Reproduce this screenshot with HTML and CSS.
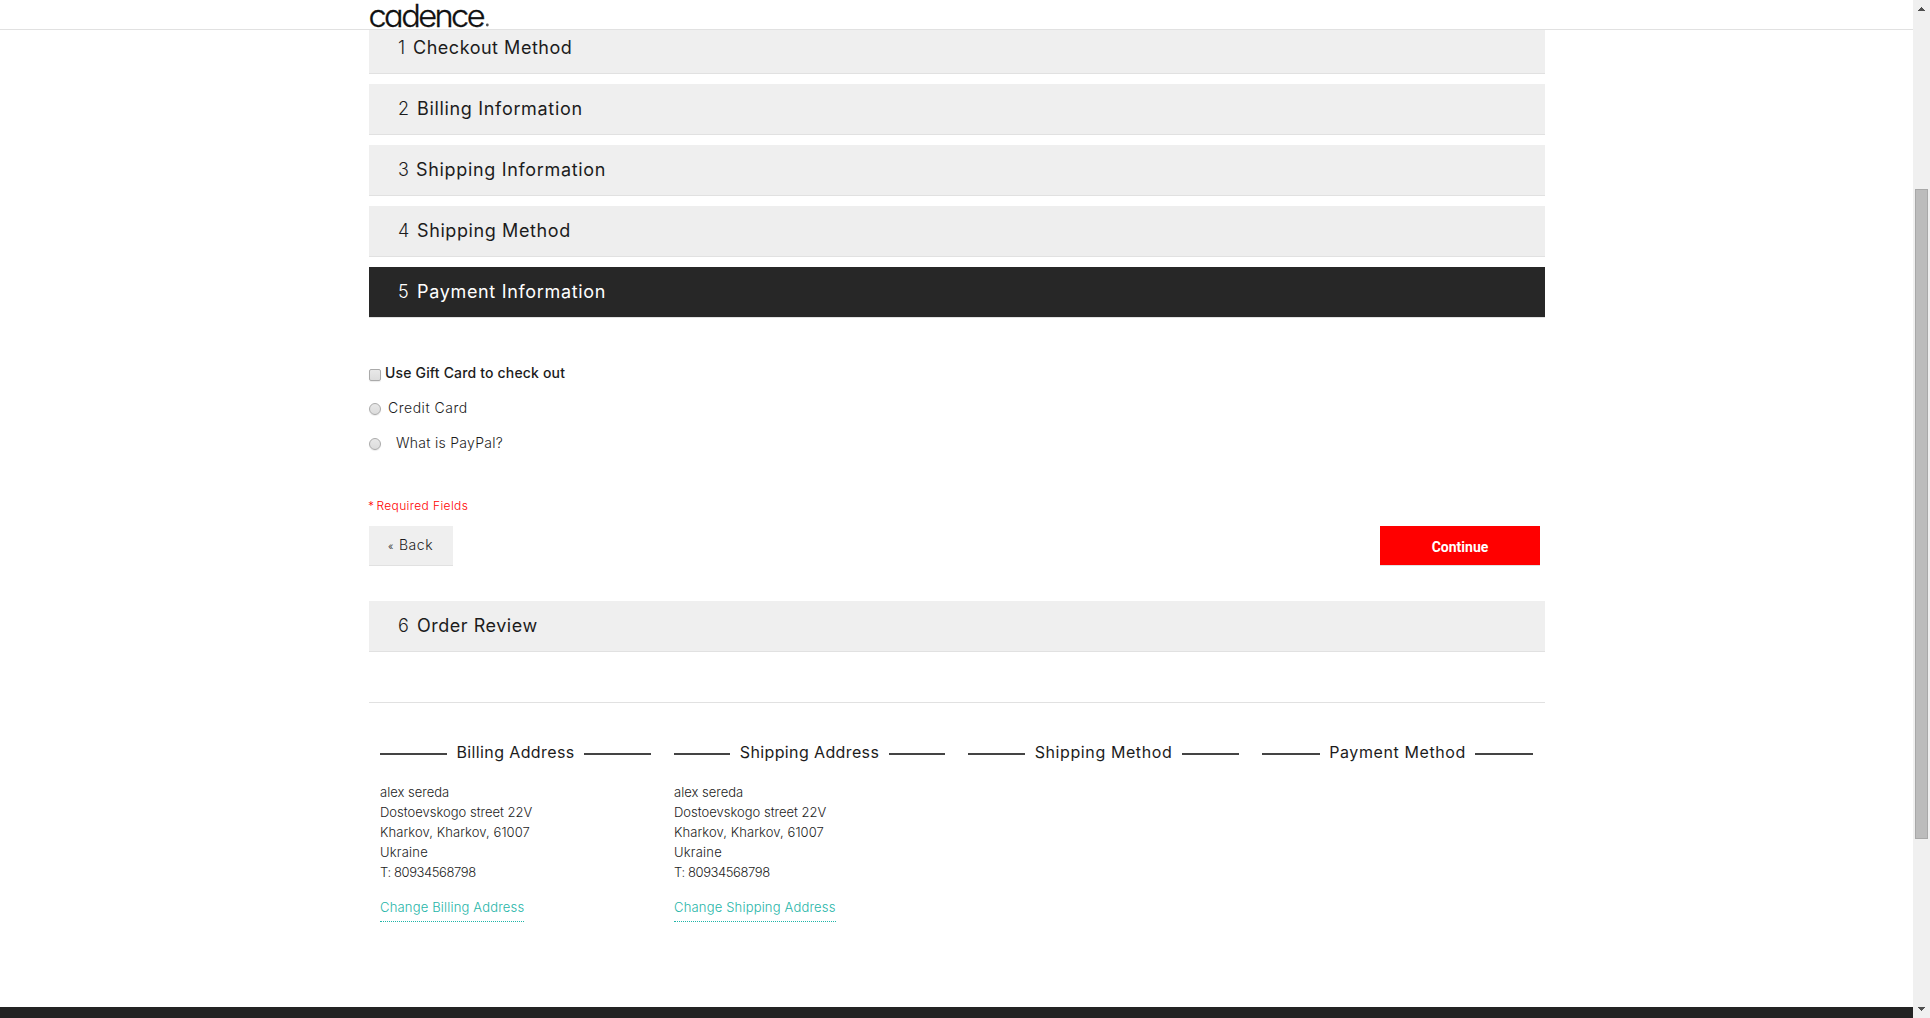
FILE: index.html
```html
<!DOCTYPE html>
<html lang="en">
<head>
<meta charset="utf-8">
<title>Checkout</title>
<link rel="stylesheet" href="styles.css">
</head>
<body>
<div class="viewport">
  <div class="page">
    <header class="header">
      <svg class="logo" viewBox="0 0 120 28" role="img" aria-label="cadence">
        <text class="logo-text" transform="translate(-0.5 26.8) scale(1.05 1)" textLength="111.5" lengthAdjust="spacing">cadence</text>
        <circle cx="118.3" cy="25" r="1.4" fill="#555"/>
      </svg>
    </header>
    <main class="checkout">
      <h2 class="step step-first"><span class="num num-one">1</span><span class="t50">Checkout Method</span></h2>
      <h2 class="step"><span class="num">2</span><span class="t65">Billing Information</span></h2>
      <h2 class="step"><span class="num num-three">3</span><span class="t65">Shipping Information</span></h2>
      <h2 class="step step-alt"><span class="num">4</span><span class="t60">Shipping Method</span></h2>
      <h2 class="step step-active"><span class="num">5</span><span class="t65">Payment Information</span></h2>
      <form class="payment">
        <label class="option option-gift"><input type="checkbox" class="check"><span class="t20">Use Gift Card to check out</span></label>
        <label class="option"><input type="radio" name="method" class="radio"><span class="t50">Credit Card</span></label>
        <label class="option option-paypal"><input type="radio" name="method" class="radio"><span class="t30">What is PayPal?</span></label>
        <p class="required">* <span>Required Fields</span></p>
        <div class="buttons">
          <a class="back"><small>«</small><span class="t50">Back</span></a>
          <button type="button" class="continue">Continue</button>
        </div>
      </form>
      <h2 class="step"><span class="num">6</span><span class="t50">Order Review</span></h2>
      <section class="progress">
        <div class="col">
          <h3 class="col-title"><span class="t40">Billing Address</span></h3>
          <address>alex sereda<br>Dostoevskogo street 22V<br><span class="city">Kharkov, Kharkov, 61007</span><br><span class="t20">Ukraine</span><br><span class="phone">T: 80934568798</span></address>
          <a class="change">Change Billing Address</a>
        </div>
        <div class="col">
          <h3 class="col-title"><span class="t40">Shipping Address</span></h3>
          <address>alex sereda<br>Dostoevskogo street 22V<br><span class="city">Kharkov, Kharkov, 61007</span><br><span class="t20">Ukraine</span><br><span class="phone">T: 80934568798</span></address>
          <a class="change">Change Shipping Address</a>
        </div>
        <div class="col">
          <h3 class="col-title"><span class="t60">Shipping Method</span></h3>
        </div>
        <div class="col">
          <h3 class="col-title"><span class="t60">Payment Method</span></h3>
        </div>
      </section>
    </main>
    <footer class="footer"></footer>
  </div>
  <div class="scrollbar">
    <svg class="arrow" viewBox="0 0 7 4" shape-rendering="crispEdges"><path d="M3 0h1v1h1v1h1v1h1v1H0V3h1V2h1V1h1z"/></svg>
    <div class="thumb"></div>
    <svg class="arrow" viewBox="0 0 7 4" shape-rendering="crispEdges"><path d="M0 0h7v1H6v1H5v1H4v1H3V3H2V2H1V1H0z"/></svg>
  </div>
</div>
</body>
</html>
```
FILE: styles.css
```css
* { box-sizing: border-box; }
body {
  margin: 0;
  background: #fff;
  color: #1c1c1c;
  font-family: Inter, "Liberation Sans", sans-serif;
  font-weight: 300;
  overflow: hidden;
}
h2, h3, p { margin: 0; font-weight: 400; }

.viewport { display: flex; height: 1018px; }
.page { flex: 1; display: flex; flex-direction: column; }

.header {
  height: 30px;
  padding-left: 369px;
  border-bottom: 1px solid #e1e1e1;
}
.logo { display: block; width: 120px; height: 28px; overflow: visible; }
.logo-text {
  font-family: Inter, sans-serif;
  font-size: 31px;
  font-weight: 300;
  font-feature-settings: "cv11";
  fill: #111;
  stroke: #111;
  stroke-width: .3px;
}

.checkout { flex: 1; width: 1176px; margin-left: 369px; }

.step {
  display: flex;
  height: 51px;
  margin-bottom: 10px;
  padding-left: 29px;
  background: #efefef;
  border-bottom: 1px solid #e1e1e1;
  font-size: 18px;
  font-weight: 400;
  line-height: 49px;
}
.step-first { height: 44px; line-height: 35px; }
.step-alt { background: #eee; }
.step-active { background: #272727; color: #fff; margin-bottom: 0; }
.num { width: 19px; font-weight: 300; }
.num-three { width: 18px; }
.num-one { width: 15px; }

.t20 { letter-spacing: .2px; }
.t30 { letter-spacing: .28px; }
.t40 { letter-spacing: .38px; }
.t50 { letter-spacing: .52px; }
.t60 { letter-spacing: .6px; }
.t65 { letter-spacing: .67px; }

.payment { padding: 45px 0 35px; }
.option {
  display: flex;
  height: 20px;
  margin-bottom: 15px;
  gap: 7px;
  font-size: 14px;
  line-height: 20px;
}
.option-gift { gap: 4px; font-weight: 500; }
.option-gift .t20 { letter-spacing: .17px; }
.option-paypal { gap: 15px; margin-bottom: 43px; }
.check, .radio {
  appearance: none;
  flex: none;
  width: 12px;
  height: 12px;
  margin: 5px 0 0;
  border: 1px solid #aaa;
  background: linear-gradient(#e8e8e8, #dcdcdc);
  box-shadow: 0 1px 1px rgba(0, 0, 0, .08);
}
.check { margin-top: 6px; border-radius: 2px; }
.radio { border-radius: 50%; }

.required {
  margin-left: -1px;
  color: #f00;
  font-size: 12px;
  font-weight: 300;
  line-height: 20px;
}
.required span { margin-left: -1px; letter-spacing: .38px; }
.buttons {
  display: flex;
  justify-content: space-between;
  margin-top: 10px;
  padding-right: 5px;
}
.back {
  display: flex;
  gap: 5px;
  width: 84px;
  height: 40px;
  padding-left: 19px;
  background: #efefef;
  border-bottom: 1px solid #e1e1e1;
  font-size: 14px;
  line-height: 38px;
}
.back small { width: 6px; font-size: 10px; line-height: 40px; }
.continue {
  width: 160px;
  height: 40px;
  padding: 2px 0 0;
  border: 0;
  border-bottom: 1px solid #e1e1e1;
  background: #f00;
  color: #fff;
  font: 700 14px/38px Roboto, sans-serif;
}

.progress {
  display: grid;
  grid-template-columns: repeat(4, 294px);
  margin-top: 50px;
  padding-top: 37px;
  border-top: 1px solid #e1e1e1;
}
.col { padding: 0 12px 0 11px; }
.col-title {
  display: flex;
  align-items: center;
  gap: 9.5px;
  height: 24px;
  font-size: 16px;
  line-height: 24px;
  white-space: nowrap;
}
.col-title::before, .col-title::after {
  content: "";
  flex: 1;
  height: 2px;
  margin-top: 4px;
  background: #444;
}
address {
  margin: 18px 0 14px;
  font-size: 13px;
  font-style: normal;
  line-height: 20px;
}
.city { letter-spacing: .08px; }
.phone { letter-spacing: -.4px; }
.change {
  display: inline-block;
  padding-bottom: 4px;
  border-bottom: 1px dotted #1fb5a8;
  color: #1fb5a8;
  font-size: 13px;
  line-height: 20px;
  letter-spacing: .18px;
}

.footer { height: 11px; background: #232323; }

.scrollbar {
  display: flex;
  flex-direction: column;
  align-items: center;
  width: 17px;
  padding: 7px 0;
  background: #f0f0f0;
}
.arrow { width: 7px; height: 4px; fill: #505050; }
.thumb {
  width: 13px;
  height: 650px;
  margin: 178px 0 168px;
  background: #bcbcbc;
  border: 1px solid #a8a8a8;
}
```
